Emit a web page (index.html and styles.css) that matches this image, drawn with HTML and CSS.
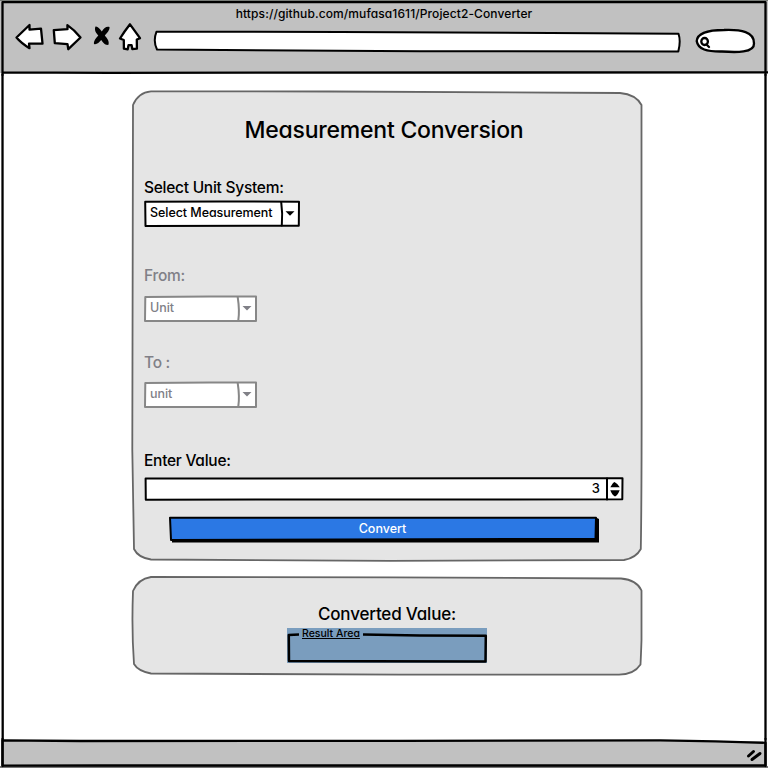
FILE: index.html
```html
<!DOCTYPE html>
<html lang="en">
<head>
<meta charset="utf-8">
<title>Measurement Conversion</title>
<link rel="stylesheet" href="styles.css">
</head>
<body>
<div class="window">
  <header class="chrome">
    <svg class="sketch" viewBox="0 0 768 75">
      <path class="gray" d="M0 0H768V73H0Z"/>
      <path class="edge" d="M0 0H768"/>
      <path class="ink frame" d="M2.5 75V2.2H765.5V75M2.5 72.3L110 72.8L768 72.3"/>
    </svg>
    <div class="address">https://github.com/mufasa1611/Project2-Converter</div>
    <div class="toolbar">
      <svg class="nav" viewBox="14 22 130 30">
        <path class="ink white" d="M16.5 37.5L29.5 25V29.7L41 28.7L42.5 43.5L29 43.7L29.5 48.2Q21 43 16.5 37.5Z"/>
        <path class="ink white" d="M53.8 30.2L67.5 29.2L67.4 25.1Q74 29.5 80.5 37.5L68.3 49.2L67.5 44.2L54.8 43.2Z"/>
        <path class="cross" d="M95.5 26.500C97.500 26 99.500 28.500 101.800 31.500C104 28 106.500 26 109.500 27C110 30 107 33 104.800 35.500C107.500 38.500 109.500 41.500 108.500 44.800C105 45.500 103 42.500 101.200 40C99 42.500 96.500 45 94 44C93.500 41 96 38 98.300 35.500C96 33 94 30 95.500 26.500Z"/>
        <path class="ink white" d="M130 24.3L140 38.2L136.800 39.500L136.900 48.700L132.300 49L131.600 45.200H128.500L127.700 49.400L123.900 48.700L123.800 40L120 38.500Q124 32 130 24.300Z"/>
      </svg>
      <svg class="urlbar" viewBox="152 28 532 26"><path class="ink white" d="M156.500 31.700L340 32L678.500 33.700Q681 41 678.300 51.500L420 51.300L157 49.500Q152.800 41 156.500 31.700Z"/></svg>
      <svg class="search" viewBox="692 26 66 32">
        <path class="ink white" d="M696.700 41C697.500 33 708 30 724 30C741 29.300 754.500 32 754 43.500C754.500 53 736 52.500 722 51.500C707 51.700 698 49.500 696.700 41Z"/>
        <ellipse class="ink glass" cx="704.600" cy="41.500" rx="3.300" ry="3.500"/><path class="ink glass" d="M706.500 44.500L709 47"/>
      </svg>
    </div>
  </header>

  <main class="page">
    <svg class="sketch" viewBox="0 75 768 664"><path class="ink frame" d="M2.500 75L2.700 739M765.500 75V739"/></svg>
    <section class="card converter">
      <svg class="sketch" viewBox="131 90 512 472">
        <path class="outline" d="M151 91.300L330 91.500L620 93Q636 94.500 641.500 105L641.500 300Q642 480 640.800 549Q636 558 624 560L390 560.800L151 559.500Q138 557.500 134 549L132.300 450L133 105Q138 92.500 151 91.300Z"/>
      </svg>
      <h1 class="title">Measurement Conversion</h1>
      <label class="label system">Select Unit System:</label>
      <div class="combo wide">
        <svg class="sketch" viewBox="144 200 156 27"><path class="ink white" d="M145.200 201.800L220 201.400L299 201.800L298.800 225.800L145.500 226Z"/><path class="ink" d="M281.200 202Q282.800 213 281.800 225.500"/><path d="M285.500 211.200H294.500L290 215.700Z"/></svg>
        <span>Select Measurement</span>
      </div>
      <label class="label from muted">From:</label>
      <div class="combo unit muted">
        <svg class="sketch" viewBox="144 295 113 27"><path class="dim white" d="M145.300 297L210 296.400L256 296.500V321H145Z"/><path class="dim" d="M237.700 297Q239.800 311 238.300 320.500"/><path class="arrow" d="M242.500 306H251.500L247 310.500Z"/></svg>
        <span>Unit</span>
      </div>
      <label class="label to muted">To :</label>
      <div class="combo unit muted">
        <svg class="sketch" viewBox="144 295 113 27"><path class="dim white" d="M145.300 297L210 296.400L256 296.500V321H145Z"/><path class="dim" d="M237.700 297Q239.800 311 238.300 320.500"/><path class="arrow" d="M242.500 306H251.500L247 310.500Z"/></svg>
        <span>unit</span>
      </div>
      <label class="label value">Enter Value:</label>
      <div class="stepper">
        <svg class="sketch" viewBox="144 477 480 24"><path class="ink white" d="M145.600 478.500L622.500 478.300L622.300 499.300L145.800 499.700Z"/><path class="ink" d="M607 478.500V499.500"/><path d="M610.300 487.300Q613 482.500 614.500 482Q617.500 483.500 619.800 487.300ZM610.300 490.200H619.700Q617.500 495.500 615 496.500Q612 495 610.300 490.200Z"/></svg>
        <span>3</span>
      </div>
      <div class="button">
        <svg class="sketch" viewBox="169 516 430 27"><path d="M172 518H597L599 519V542.500H172Z"/><path class="ink blue" d="M170 517.700L596 517.700L595.500 538.800L171 540Z"/></svg>
        <span>Convert</span>
      </div>
    </section>

    <section class="card result">
      <svg class="sketch" viewBox="131 576 512 100">
        <path class="outline" d="M151 577L390 577.400L621 578.500Q637 580 641.500 590.500V640Q641 655 640.500 664.500Q634 674.500 619 674.700L400 674.700L151 673.500Q138 671 134 664Q131.500 630 133 591Q138 579 151 577Z"/>
      </svg>
      <h2 class="subtitle">Converted Value:</h2>
      <div class="area">
        <svg class="sketch" viewBox="287 628 200 35"><path class="ink heavy" d="M299 634.600L288.800 635L289 661L370 661.200L485.500 661.500L485.800 635.800L420 635.600L363 634.500"/></svg>
        <span>Result Area</span>
      </div>
    </section>
  </main>

  <footer class="status">
    <svg class="sketch" viewBox="0 739 768 29">
      <path class="edge-bottom" d="M0 766H768V768H0Z"/>
      <path class="gray ink frame" d="M2.500 740.300L80 741L400 740.800L660 740.300Q720 741 765.500 742.800L765.500 765.500L100 765.500L2.500 765.600Z"/>
      <path class="ink frame" d="M2.500 739V766M765.500 739V766"/>
      <path class="grip" d="M748.500 756L753.500 751.500M752 759.500L760 753.500"/>
    </svg>
  </footer>
</div>
</body>
</html>
```

FILE: styles.css
```css
* { box-sizing: border-box; }
body {
  margin: 0;
  background: #fff;
  color: #000;
  font-family: Inter, "Liberation Sans", sans-serif;
  font-feature-settings: "cv11", "calt" 0;
  font-weight: 450;
}
svg { display: block; overflow: visible; }
.window { width: 768px; height: 768px; display: flex; flex-direction: column; overflow: hidden; }

/* hand-drawn shapes lie behind the content of their box */
.sketch { position: absolute; inset: 0; width: 100%; height: 100%; z-index: -1; }
.chrome, .page, .card, .combo, .stepper, .button, .area, .status { position: relative; z-index: 0; }
.ink, .dim, .outline { fill: none; stroke: #000; stroke-width: 2; stroke-linejoin: round; stroke-linecap: round; }
.frame { stroke-width: 2.3; }
.heavy { stroke-width: 2.5; stroke-linecap: butt; }
.dim { stroke: #878787; }
.outline { fill: #e5e5e5; stroke: #666; stroke-width: 1.8; }
.white { fill: #fff; }
.gray { fill: #c1c1c1; }
.blue { fill: #2b78e4; }
.arrow { fill: #808087; }
.edge { stroke: #777b77; stroke-width: 2; }
.edge-bottom { fill: #777; }
.grip { stroke: #000; stroke-width: 3; stroke-linecap: round; }

.chrome { height: 75px; flex: none; }
.address { height: 22px; padding-top: 4px; text-align: center; font-size: 12px; line-height: 20px; letter-spacing: .1px; white-space: nowrap; }
.toolbar { display: flex; padding-left: 14px; }
.nav { width: 130px; height: 30px; }
.nav .ink, .search .ink { stroke-width: 2.3; }
.urlbar { width: 532px; height: 26px; margin: 6px 0 0 8px; }
.search { width: 66px; height: 32px; margin: 4px 0 0 8px; }

.page { flex: 1; display: flex; flex-direction: column; align-items: center; padding: 15px 0 0 6px; }
.card { width: 512px; display: flex; flex-direction: column; }
.converter { height: 472px; padding: 0 13px; }
.title { margin: 26px 0 0 -6px; text-align: center; font-size: 23px; line-height: 28px; font-weight: 450; letter-spacing: -.23px; white-space: nowrap; }
.label { font-size: 15.500px; line-height: 20px; letter-spacing: -.26px; white-space: nowrap; }
.system { margin-top: 34px; }
.combo { height: 27px; padding-left: 6px; font-size: 12.500px; line-height: 25px; letter-spacing: -.06px; white-space: nowrap; }
.wide { width: 156px; margin-top: 2px; }
.unit { width: 113px; }
.muted { color: #808087; }
.from { margin-top: 39px; margin-bottom: 9px; }
.to { margin-top: 31px; margin-bottom: 8px; }
.value { margin-top: 43px; }
.stepper { height: 24px; width: 480px; margin-top: 6px; padding-right: 24px; text-align: right; font-size: 13px; line-height: 23px; }
.button { width: 430px; height: 27px; margin: 15px 0 0 25px; padding-right: 3px; text-align: center; color: #fff; font-size: 12.500px; line-height: 25px; }

.result { height: 100px; margin-top: 14px; align-items: center; }
.subtitle { margin: 28px 0 0; font-size: 17px; line-height: 20px; font-weight: 450; letter-spacing: -.18px; white-space: nowrap; }
.area { width: 200px; height: 35px; margin-top: 4px; background: #7a9dbe; padding-left: 15px; font-size: 10.500px; line-height: 11px; text-decoration: underline; }
.status { height: 29px; flex: none; }
```
